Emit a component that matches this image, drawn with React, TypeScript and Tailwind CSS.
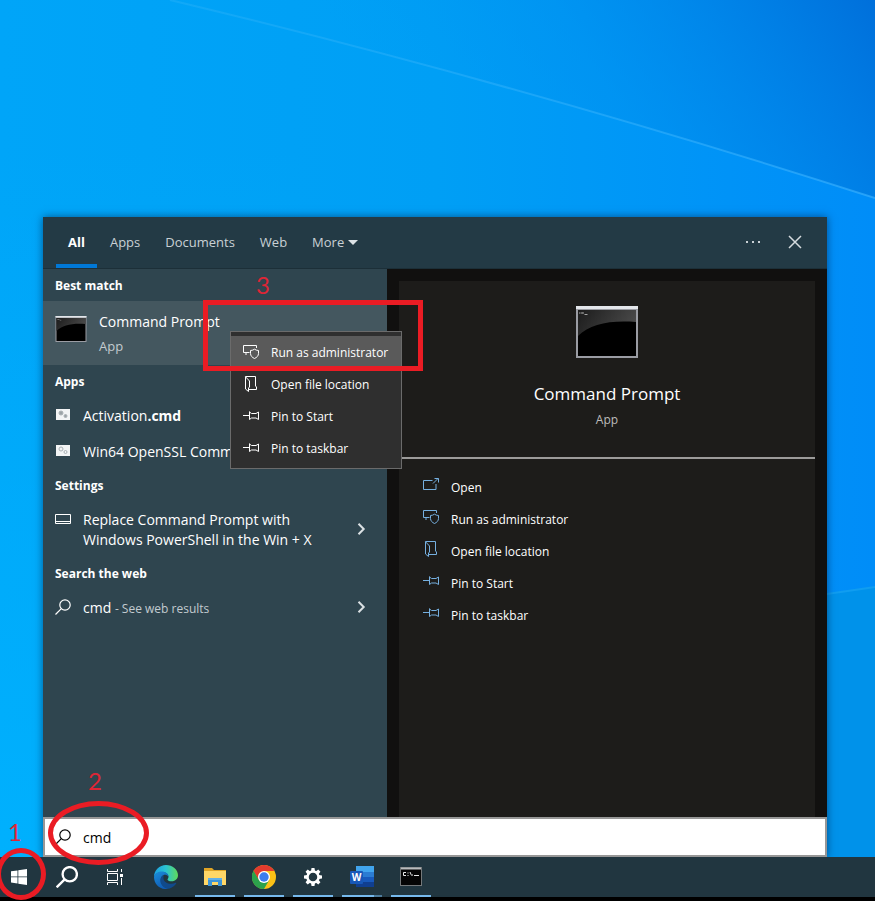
import type { ReactNode } from "react";
import { useState } from "react";

const TABS = ["All", "Apps", "Documents", "Web"];

const ACTIONS: { label: string; icon: () => ReactNode }[] = [
  { label: "Run as administrator", icon: ShieldIcon },
  { label: "Open file location", icon: FileLocationIcon },
  { label: "Pin to Start", icon: PinIcon },
  { label: "Pin to taskbar", icon: PinIcon },
];

function Wallpaper() {
  return (
    <svg
      className="absolute inset-0 h-full w-full"
      viewBox="0 0 875 901"
      preserveAspectRatio="none"
      aria-hidden
    >
      <defs>
        <linearGradient id="sky" x1="0" y1="0" x2="1" y2="0">
          <stop offset="0" stopColor="#00a5f8" />
          <stop offset="0.5" stopColor="#009ff5" />
          <stop offset="1" stopColor="#008df8" />
        </linearGradient>
        <linearGradient id="upper" x1="480" y1="260" x2="900" y2="0" gradientUnits="userSpaceOnUse">
          <stop offset="0" stopColor="#0098f2" stopOpacity="0" />
          <stop offset="0.4" stopColor="#0090ee" stopOpacity="0.5" />
          <stop offset="1" stopColor="#006cd8" />
        </linearGradient>
        <linearGradient id="glow" x1="0" y1="0" x2="0" y2="1">
          <stop offset="0" stopColor="#00b4ff" stopOpacity="0" />
          <stop offset="1" stopColor="#00b4ff" stopOpacity="0.8" />
        </linearGradient>
        <linearGradient id="beam" x1="170" y1="0" x2="875" y2="198" gradientUnits="userSpaceOnUse">
          <stop offset="0" stopColor="#38b6f8" stopOpacity="0.3" />
          <stop offset="1" stopColor="#3fb4ff" stopOpacity="0.6" />
        </linearGradient>
      </defs>
      <rect width="875" height="901" fill="url(#sky)" />
      <path d="M170 0 Q520 84 875 198 V0Z" fill="url(#upper)" />
      <path d="M170 0 Q520 84 875 198" fill="none" stroke="url(#beam)" strokeWidth="2" />
      <rect y="150" width="300" height="751" fill="url(#glow)" />
      <path d="M827 594 L875 587 V901 H827Z" fill="#0092ea" />
      <path d="M827 594 L875 587" stroke="#109df0" strokeWidth="2" />
    </svg>
  );
}

function ShieldIcon() {
  return (
    <svg className="h-4 w-4" viewBox="0 0 16 16" fill="none" stroke="currentColor" aria-hidden>
      <path d="M6.500 8.500H3v2.500M3 8.500H.500v-7h13v2.500" />
      <path d="M11.500 5.200c1.200.9 2.500 1.200 4 1.300v3c0 2.300-1.700 4-4 5-2.300-1-4-2.700-4-5v-3c1.500-.1 2.800-.4 4-1.300z" />
    </svg>
  );
}

function FileLocationIcon() {
  return (
    <svg className="h-4 w-4" viewBox="0 0 16 16" fill="none" stroke="currentColor" aria-hidden>
      <path d="M2.500.500h10v9.500l1 1v2.500H6" />
      <path d="M2.500.500v12.500l3 2.500v-3.500l1-1V5L2.500.800" />
    </svg>
  );
}

function PinIcon() {
  return (
    <svg className="h-4 w-4" viewBox="0 0 16 16" fill="none" stroke="currentColor" aria-hidden>
      <path d="M0 7.500h6.500" />
      <path d="M6.500 3.500v8M6.500 4l2 1.500h4.500l2.500-1.500v7.500L13 10H8.500l-2 1.500" />
    </svg>
  );
}

function OpenIcon() {
  return (
    <svg className="h-4 w-4" viewBox="0 0 16 16" fill="none" stroke="currentColor" aria-hidden>
      <path d="M9.500 3.500h-9v9h12.500V7" />
      <path d="M10 6.500l5-5M11.500 1.500h4v4" />
    </svg>
  );
}

function SearchIcon({ className, weight }: { className: string; weight: number }) {
  return (
    <svg className={className} viewBox="0 0 16 16" fill="none" stroke="currentColor" aria-hidden>
      <circle cx="10" cy="6" r="5.200" strokeWidth={weight} />
      <path d="M6.300 9.700L.500 15.500" strokeWidth={weight} />
    </svg>
  );
}

function ChevronIcon() {
  return (
    <svg className="h-3 w-3 shrink-0" viewBox="0 0 12 12" fill="none" aria-hidden>
      <path d="M3.500.800L8.700 6l-5.200 5.200" stroke="#dbe1e4" strokeWidth="2" />
    </svg>
  );
}

function ScriptIcon({ gear }: { gear: string }) {
  return (
    <svg className="h-4 w-4 shrink-0" viewBox="0 0 16 16" aria-hidden>
      <rect x="1" y="2" width="14" height="11" fill="#f2f4f5" />
      <circle cx="6" cy="6" r="2" fill={gear} stroke="#a9b0b4" />
      <circle cx="10.500" cy="9" r="1.500" fill={gear} stroke="#a9b0b4" />
    </svg>
  );
}

function ConsoleIcon({ className }: { className: string }) {
  return (
    <svg className={className} viewBox="0 0 62 52" aria-hidden>
      <defs>
        <linearGradient id="gloss" x1="0" y1="0" x2="1" y2="0.300">
          <stop offset="0" stopColor="#1c1c1c" />
          <stop offset="1" stopColor="#484848" />
        </linearGradient>
      </defs>
      <rect width="62" height="52" fill="#9a9ca3" />
      <rect width="62" height="3" fill="#e3e6ea" />
      <rect x="2" y="4" width="58" height="46" fill="#000" />
      <path d="M2 4h58v12C34 14 14 18 2 30z" fill="url(#gloss)" />
      <path d="M3 7h1.500M5 7h1.500M7 6v2M8.500 8.500h3" stroke="#a5a5a5" />
    </svg>
  );
}

function SearchTabs({ active, onSelect }: { active: string; onSelect: (tab: string) => void }) {
  return (
    <header className="flex h-[52px] shrink-0 items-stretch border-b border-[#1c2f38] bg-[#233a45] pl-[13px] text-[13px] text-[#c9d1d5]">
      <nav className="flex gap-px" aria-label="Search filters">
        {TABS.map((tab) => (
          <button
            key={tab}
            type="button"
            onClick={() => onSelect(tab)}
            className={`border-b-4 px-3 pt-1 ${
              tab === active ? "border-[#0078d7] font-bold text-white" : "border-transparent"
            }`}
          >
            {tab}
          </button>
        ))}
        <button type="button" className="flex items-center gap-1 px-3">
          More
          <svg className="h-[5px] w-2.5" viewBox="0 0 10 5" aria-hidden>
            <path d="M0 0h10L5 5z" fill="#dde3e6" />
          </svg>
        </button>
      </nav>
      <div className="ml-auto flex items-center gap-[26px] pr-6 pb-0.5">
        <button type="button" aria-label="Options">
          <svg className="h-4 w-4" viewBox="0 0 16 16" fill="#c9d1d5" aria-hidden>
            <path d="M1 7h2v2H1zM7 7h2v2H7zM13 7h2v2h-2z" />
          </svg>
        </button>
        <button type="button" aria-label="Close">
          <svg className="h-4 w-4" viewBox="0 0 16 16" aria-hidden>
            <path d="M2 2l12 12M14 2L2 14" stroke="#d5dbde" strokeWidth="1.500" />
          </svg>
        </button>
      </div>
    </header>
  );
}

function GroupTitle({ children }: { children: ReactNode }) {
  return <h2 className="flex h-8 items-center px-3 pt-0.5 text-xs font-bold">{children}</h2>;
}

function Results() {
  return (
    <section className="relative w-[344px] shrink-0 bg-[#2f454f] text-white" aria-label="Results">
      <GroupTitle>Best match</GroupTitle>
      <button type="button" className="flex h-16 w-full items-center gap-3 bg-[#44575f] px-3 text-left">
        <ConsoleIcon className="mb-2 h-[26px] w-8" />
        <span className="flex flex-col pt-0.5">
          <span className="text-sm leading-6">Command Prompt</span>
          <span className="text-[13px] leading-6 text-[#c3cbcf]">App</span>
        </span>
      </button>

      <GroupTitle>Apps</GroupTitle>
      <button type="button" className="flex h-9 w-full items-center gap-3 px-3 text-sm">
        <ScriptIcon gear="#9aa2a6" />
        <span className="pt-0.5">
          Activation<b>.cmd</b>
        </span>
      </button>
      <button type="button" className="flex h-9 w-full items-center gap-3 px-3 text-left text-sm">
        <ScriptIcon gear="#f2f4f5" />
        <span className="w-[147px] overflow-hidden pt-0.5 whitespace-nowrap">Win64 OpenSSL Comm</span>
      </button>

      <GroupTitle>Settings</GroupTitle>
      <button type="button" className="flex h-14 w-full items-center gap-3 pr-5 pl-3 text-left">
        <svg className="mb-5 h-4 w-4 shrink-0" viewBox="0 0 16 16" fill="none" stroke="#fff" aria-hidden>
          <path d="M.500 3.500h15v9H.500zM.500 10.500h15" />
        </svg>
        <span className="flex-1 pt-0.5 text-sm leading-5">
          Replace Command Prompt with
          <br />
          Windows PowerShell in the Win + X
        </span>
        <ChevronIcon />
      </button>

      <GroupTitle>Search the web</GroupTitle>
      <button type="button" className="flex h-9 w-full items-center gap-3 pr-5 pl-3 text-left">
        <SearchIcon className="h-4 w-4 shrink-0" weight={1.2} />
        <span className="flex-1 pt-0.5 text-sm">
          cmd <span className="text-xs text-[#c3cbcf]">- See web results</span>
        </span>
        <ChevronIcon />
      </button>

      <ContextMenu />
    </section>
  );
}

function ContextMenu() {
  return (
    <ul
      className="absolute top-[62px] left-[187px] z-10 w-[172px] border border-[#6b6b6b] bg-[#2f2f2f] py-1 text-xs"
      aria-label="Command Prompt actions"
    >
      {ACTIONS.map(({ label, icon: Icon }, i) => (
        <li key={label}>
          <button
            type="button"
            className={`flex h-8 w-full items-center gap-3 pl-3 whitespace-nowrap ${i === 0 ? "bg-[#5a5a5a]" : ""}`}
          >
            <Icon />
            <span className="pt-0.5">{label}</span>
          </button>
        </li>
      ))}
    </ul>
  );
}

function Preview() {
  const actions = [{ label: "Open", icon: OpenIcon }, ...ACTIONS];

  return (
    <section className="flex-1 bg-[#11100f] px-3 pt-3 text-white" aria-label="Preview">
      <div className="h-full bg-[#1d1c1a]">
        <div className="flex h-[178px] flex-col items-center border-b-2 border-[#9c9b9a] pt-[25px]">
          <ConsoleIcon className="h-[52px] w-[62px]" />
          <h1 className="mt-[22px] text-[17px] leading-7">Command Prompt</h1>
          <p className="text-xs leading-6 text-[#bdbdbc]">App</p>
        </div>
        <ul className="pt-3 text-xs">
          {actions.map(({ label, icon: Icon }) => (
            <li key={label}>
              <button type="button" className="flex h-8 w-full items-center gap-3 pl-6">
                <span className="pb-1 text-[#76b0e0]">
                  <Icon />
                </span>
                <span className="pt-0.5">{label}</span>
              </button>
            </li>
          ))}
        </ul>
      </div>
    </section>
  );
}

function SearchPanel() {
  const [tab, setTab] = useState("All");
  const [query, setQuery] = useState("cmd");

  return (
    <div className="flex flex-1 flex-col shadow-[0_0_8px_rgba(0,30,70,0.6)]">
      <SearchTabs active={tab} onSelect={setTab} />
      <div className="flex flex-1">
        <Results />
        <Preview />
      </div>
      <label className="flex h-10 items-center gap-3 border-2 border-[#979797] bg-white pl-2.5 text-black">
        <SearchIcon className="h-4 w-4" weight={1.2} />
        <input
          type="text"
          aria-label="Search"
          value={query}
          onChange={(e) => setQuery(e.target.value)}
          className="flex-1 pt-0.5 text-sm outline-none"
        />
      </label>
    </div>
  );
}

function EdgeLogo() {
  return (
    <svg className="h-6 w-6" viewBox="0 0 24 24" aria-hidden>
      <defs>
        <linearGradient id="edgeTop" x1="0" y1="0.500" x2="1" y2="0.500">
          <stop offset="0" stopColor="#1ba0e2" />
          <stop offset="0.500" stopColor="#2bc3d2" />
          <stop offset="1" stopColor="#5fdc5a" />
        </linearGradient>
        <linearGradient id="edgeSide" x1="0" y1="0" x2="0.500" y2="1">
          <stop offset="0" stopColor="#1b8fdc" />
          <stop offset="1" stopColor="#0f5cb4" />
        </linearGradient>
      </defs>
      <path d="M0 12C0 5 5.500 0 12 0s12 4.800 12 10.200c0 3.600-2.800 6-6.300 6-2.800 0-4.200-1-4.200-1.800 0-.6 1-1.100 1-2.700 0-2.500-2.700-4.700-6-4.700C4 7 1 9 0 12z" fill="url(#edgeTop)" />
      <path d="M0 12c.7-3.600 4.200-5.500 8-5.500 3.500 0 6.500 2.300 6.500 5.200-1-1.500-2.200-2-3.500-2-2.600 0-4.200 2.500-4.200 5.300C6.800 19.500 10 23 14.500 23.700 6.500 25.500 0 19.500 0 12z" fill="url(#edgeSide)" />
      <path d="M9.700 10C7.500 11 6.300 13.200 6.300 15.500c0 4.500 4.200 8.300 8.700 8.300 3.300-1 6-3 7.300-5.500.2-.5-.2-.7-.6-.5-4.700 2.200-12.200.700-12.300-4.800 0-1.200.3-2.200.3-3z" fill="#114a8b" />
    </svg>
  );
}

function FolderLogo() {
  return (
    <svg className="h-6 w-6" viewBox="0 0 24 24" aria-hidden>
      <path d="M1 3h8l2 2h12v15H1z" fill="#e0a526" />
      <path d="M1 6h22v14H1z" fill="#ffd766" />
      <path d="M5 21v-8h14v8h-4v-4H9v4z" fill="#3d94d6" />
      <path d="M5 13h14v2H5z" fill="#61b0e6" />
    </svg>
  );
}

function ChromeLogo() {
  return (
    <svg className="h-6 w-6" viewBox="0 0 24 24" aria-hidden>
      <circle cx="12" cy="12" r="12" fill="#fbc116" />
      <path d="M1.600 6A12 12 0 0 0 12 24l5.200-9L12 17.500 6.800 15z" fill="#2ca24c" />
      <path d="M1.600 6A12 12 0 0 1 22.400 6H12L6.800 9v6z" fill="#e33b2e" />
      <path d="M1.600 6L6.800 15l3 2-3 5.800A12 12 0 0 1 1.600 6z" fill="#2ca24c" />
      <circle cx="12" cy="12" r="6" fill="#fff" />
      <circle cx="12" cy="12" r="4.700" fill="#3b7ded" />
    </svg>
  );
}

function GearLogo() {
  return (
    <svg className="h-5 w-5" viewBox="-10 -10 20 20" aria-hidden>
      <circle r="5.500" fill="none" stroke="#fff" strokeWidth="2.500" />
      {[0, 45, 90, 135, 180, 225, 270, 315].map((angle) => (
        <path key={angle} d="M-2-5.800L-1.500-9h3L2-5.800z" fill="#fff" transform={`rotate(${angle})`} />
      ))}
    </svg>
  );
}

function WordLogo() {
  return (
    <svg className="h-6 w-6" viewBox="0 0 24 24" aria-hidden>
      <path d="M6 1h18v6H6z" fill="#41a5ee" />
      <path d="M6 7h18v5H6z" fill="#2b7cd3" />
      <path d="M6 12h18v5H6z" fill="#185abd" />
      <path d="M6 17h18v5H6z" fill="#103f91" />
      <rect y="6" width="13" height="13" rx="1" fill="#1858b8" />
      <text x="6.500" y="16" textAnchor="middle" fontSize="10" fontWeight="700" fill="#fff">
        W
      </text>
    </svg>
  );
}

function TerminalLogo() {
  return (
    <svg className="h-5 w-[22px]" viewBox="0 0 22 20" aria-hidden>
      <rect x="0.500" y="0.500" width="21" height="18" fill="#050505" stroke="#74787a" />
      <path d="M1 1.500h20" stroke="#b8bbbd" strokeWidth="2" />
      <path d="M6 5.500H3.500v3H6M8 5.500v1M8 8v1M10 5l1.500 3.500M12.500 7.500v1M14 8.500h5" fill="none" stroke="#e8e8e8" />
    </svg>
  );
}

const RUNNING: { name: string; logo: () => ReactNode; windows: number }[] = [
  { name: "Microsoft Edge", logo: EdgeLogo, windows: 0 },
  { name: "File Explorer", logo: FolderLogo, windows: 1 },
  { name: "Google Chrome", logo: ChromeLogo, windows: 1 },
  { name: "Settings", logo: GearLogo, windows: 1 },
  { name: "Word", logo: WordLogo, windows: 2 },
  { name: "Command Prompt", logo: TerminalLogo, windows: 1 },
];

function Taskbar() {
  return (
    <footer className="relative flex h-11 shrink-0 items-stretch border-b-4 border-black bg-[#213640] text-white">
      <button type="button" className="w-[43px] pl-[11px]" aria-label="Start">
        <svg className="h-4 w-4" viewBox="0 0 16 16" fill="#fff" aria-hidden>
          <path d="M0 2.300l6.500-.9v6.100H0zM7.300 1.300L16 0v7.500H7.300zM0 8.300h6.500v6.200L0 13.600zM7.300 8.300H16V16l-8.700-1.300z" />
        </svg>
      </button>
      <button type="button" className="flex w-12 items-center justify-center" aria-label="Search">
        <SearchIcon className="h-[22px] w-[22px]" weight={1.7} />
      </button>
      <button type="button" className="flex w-12 items-center justify-center" aria-label="Task view">
        <svg className="h-4 w-4" viewBox="0 0 16 16" fill="none" stroke="#fff" aria-hidden>
          <path d="M.500 0v2.500h10V0M.500 16v-2.500h10V16M.500 4.500h10v7H.500zM14.500 0v3M14.500 9v7" />
          <path d="M13 5h3v3h-3z" fill="#fff" stroke="none" />
        </svg>
      </button>
      <div className="ml-[7px] flex gap-[9px]">
        {RUNNING.map(({ name, logo: Logo, windows }) => (
          <button key={name} type="button" aria-label={name} className="flex w-10 flex-col">
            <span className="flex flex-1 items-center justify-center self-stretch pt-0.5">
              <Logo />
            </span>
            <span className="flex h-0.5 self-stretch">
              {windows > 0 && <span className="flex-1 bg-[#76b9ed]" />}
              {windows > 1 && <span className="w-2 bg-[#4d7b9b]" />}
            </span>
          </button>
        ))}
      </div>
    </footer>
  );
}

// Red marker drawings that walk through the three steps
function Annotations() {
  return (
    <div className="pointer-events-none absolute inset-0 z-20 overflow-hidden font-['Lato',sans-serif] text-2xl leading-6 text-[#dd2636]">
      <span className="absolute bottom-[57px] left-2">1</span>
      <div className="absolute bottom-px -left-1 h-[52px] w-[50px] rounded-[50%] border-5 border-[#ea1c24]" />
      <span className="absolute bottom-[108px] left-[88px]">2</span>
      <div className="absolute bottom-9 left-12 h-[64px] w-[101px] rounded-[50%] border-5 border-[#ea1c24]" />
      <span className="absolute top-[273px] left-[256px]">3</span>
      <div className="absolute top-[300px] left-[203px] h-[71px] w-[220px] border-5 border-[#ea1c24]" />
    </div>
  );
}

export default function App() {
  return (
    <div className="flex min-h-screen flex-col bg-white pr-[5px] pb-px font-['Open_Sans','Noto_Sans',sans-serif]">
      <div className="relative flex flex-1 flex-col">
        <Wallpaper />
        <main className="relative flex flex-1 flex-col pt-[217px] pr-12 pl-[43px]">
          <SearchPanel />
        </main>
        <Taskbar />
        <Annotations />
      </div>
    </div>
  );
}
